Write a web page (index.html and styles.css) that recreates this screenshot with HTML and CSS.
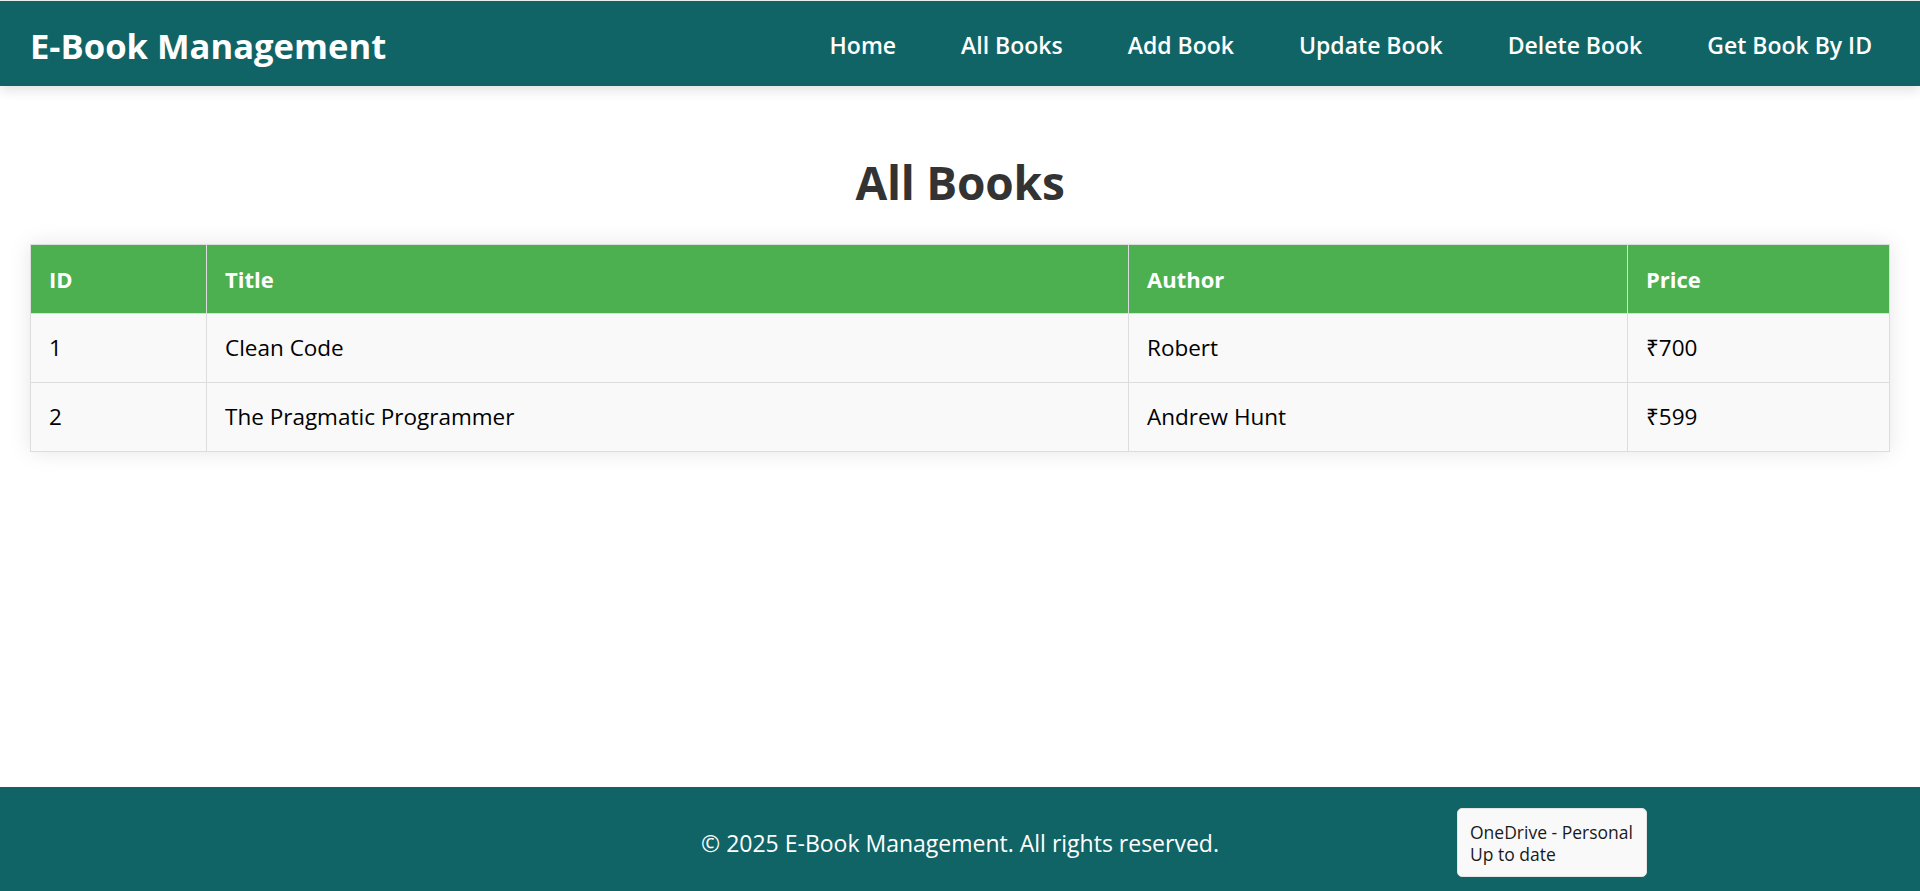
FILE: index.html
```html
<!DOCTYPE html>
<html lang="en">
<head>
<meta charset="utf-8">
<title>E-Book Management</title>
<link rel="stylesheet" href="styles.css">
</head>
<body>
  <header class="site-header">
    <div class="logo">E-Book Management</div>
    <nav class="nav">
      <a class="nav-link" href="#">Home</a>
      <a class="nav-link" href="#">All Books</a>
      <a class="nav-link" href="#">Add Book</a>
      <a class="nav-link" href="#">Update Book</a>
      <a class="nav-link" href="#">Delete Book</a>
      <a class="nav-link" href="#">Get Book By ID</a>
    </nav>
  </header>

  <main class="content">
    <h1 class="page-title">All Books</h1>
    <table class="books">
      <colgroup>
        <col class="col-id">
        <col class="col-title">
        <col class="col-author">
        <col class="col-price">
      </colgroup>
      <thead>
        <tr><th>ID</th><th>Title</th><th>Author</th><th>Price</th></tr>
      </thead>
      <tbody>
        <tr><td>1</td><td>Clean Code</td><td>Robert</td><td>₹700</td></tr>
        <tr><td>2</td><td>The Pragmatic Programmer</td><td>Andrew Hunt</td><td>₹599</td></tr>
      </tbody>
    </table>
  </main>

  <footer class="site-footer">
    <p class="copyright">© 2025 E-Book Management. All rights reserved.</p>
  </footer>

  <div class="sys-tooltip">
    <div>OneDrive - Personal</div>
    <div>Up to date</div>
  </div>
</body>
</html>
```
FILE: styles.css
```css
* { box-sizing: border-box; }

html, body { margin: 0; padding: 0; }

body {
  font-family: "Open Sans", "Noto Sans", sans-serif;
  color: #000;
  background: #fff;
  min-height: 100vh;
  display: flex;
  flex-direction: column;
}

.site-header {
  height: 86px;
  border-top: 1px solid #e9eeee;
  background: #116466;
  padding: 0 30px;
  display: flex;
  align-items: center;
  justify-content: space-between;
  box-shadow: 0 4px 12px rgba(0, 0, 0, 0.12);
  position: relative;
  z-index: 1;
}

.logo {
  color: #fff;
  font-size: 34.6px;
  font-weight: 700;
  line-height: 48px;
  padding-top: 4px;
}

.nav {
  display: flex;
  gap: 29px;
}

.nav-link {
  color: #fff;
  text-decoration: none;
  font-size: 23px;
  font-weight: 600;
  line-height: 30px;
  padding: 3px 18px 0;
}

.content {
  flex: 1;
  padding: 0 30px;
}

.page-title {
  margin: 67px 0 33px;
  text-align: center;
  color: #333;
  font-size: 46px;
  font-weight: 700;
  line-height: 58px;
  letter-spacing: -0.2px;
}

.books {
  width: 100%;
  border-collapse: collapse;
  box-shadow: 0 0 20px rgba(0, 0, 0, 0.1);
  font-size: 22.5px;
}

.col-id { width: 176px; }
.col-title { width: 922px; }
.col-author { width: 499px; }
.col-price { width: 262px; }

.books th,
.books td {
  border: 1px solid #ddd;
  padding: 18px 18px;
  line-height: 32px;
  text-align: left;
}

.books th {
  background: #4caf50;
  color: #fff;
  font-weight: 700;
  font-size: 22px;
}

.books td {
  background: #f9f9f9;
  color: #000;
}

.site-footer {
  height: 104px;
  background: #116466;
  color: #fff;
  text-align: center;
  padding-top: 40px;
}

.copyright {
  margin: 0;
  font-size: 23px;
  line-height: 32px;
}

.sys-tooltip {
  position: fixed;
  left: 1457px;
  top: 808px;
  width: 190px;
  height: 69px;
  padding: 12px 12px 0;
  background: #f9f9f9;
  border: 1px solid #e4e4e4;
  border-radius: 5px;
  color: #1a1a1a;
  font-size: 17.5px;
  line-height: 22px;
}
```
